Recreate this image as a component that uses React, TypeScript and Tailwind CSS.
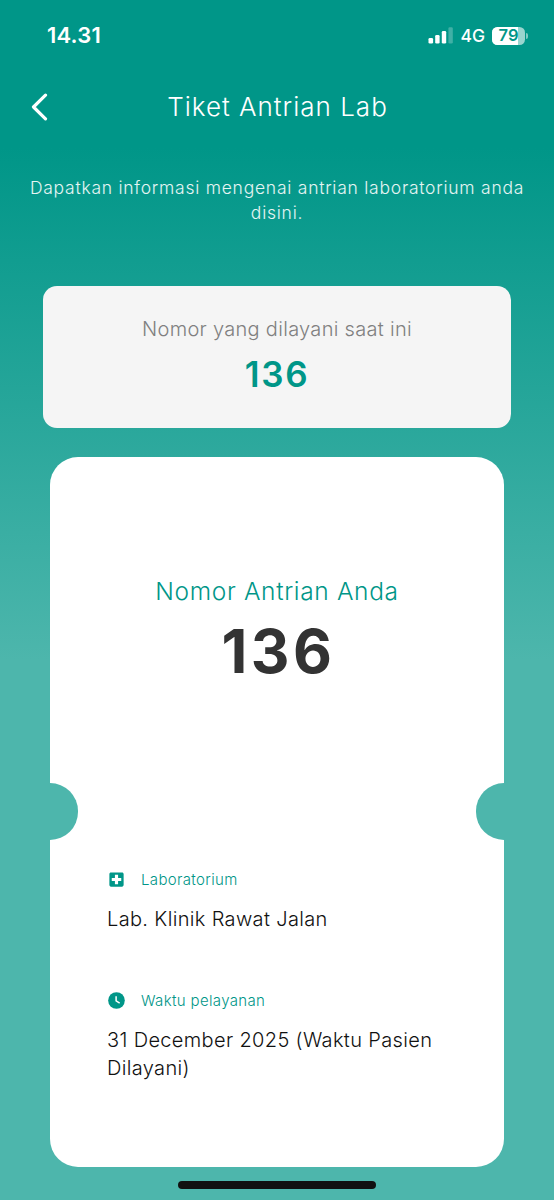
import type { ReactNode } from 'react';

const SignalIcon = () => (
  <svg width="25" height="17" viewBox="0 0 25 17" fill="white">
    <rect x="0.5" y="11" width="4.6" height="5.5" rx="1.3" />
    <rect x="7.2" y="8" width="4.4" height="8.5" rx="1.3" />
    <rect x="13.8" y="4" width="4.4" height="12.5" rx="1.3" />
    <rect x="20.4" y="0.3" width="4.4" height="16.2" rx="1.3" opacity="0.25" />
  </svg>
);

const BatteryIcon = ({ level }: { level: number }) => (
  <div className="flex items-center gap-px">
    <div className="relative flex h-[18px] w-[33px] items-center justify-center overflow-hidden rounded-[5.5px] bg-white/60">
      <div className="absolute inset-y-0 left-0 bg-white" style={{ width: `${level}%` }} />
      <span className="relative text-[16.5px] leading-none font-semibold text-[#009688]">{level}</span>
    </div>
    <div className="h-[6px] w-[2px] rounded-r-full bg-white/50" />
  </div>
);

const HospitalIcon = () => (
  <svg width="19" height="19" viewBox="0 0 24 24" fill="#009688">
    <path d="M19 3H5c-1.1 0-1.99.9-1.99 2L3 19c0 1.1.9 2 2 2h14c1.1 0 2-.9 2-2V5c0-1.1-.9-2-2-2zm-1 11h-4v4h-4v-4H6v-4h4V6h4v4h4v4z" />
  </svg>
);

const ClockIcon = () => (
  <svg width="19" height="19" viewBox="0 0 24 24">
    <circle cx="12" cy="12" r="10.5" fill="#009688" />
    <path d="M11.5 6.7v5.8l4.5 2.7" fill="none" stroke="white" strokeWidth="1.9" />
  </svg>
);

const InfoItem = ({ icon, label, value }: { icon: ReactNode; label: string; value: string }) => (
  <div>
    <div className="flex h-6 items-center gap-[15px]">
      {icon}
      <span className="text-[15px] leading-[22px] font-light tracking-[0.35px] text-[#009688]">{label}</span>
    </div>
    <p className="mt-[13px] w-[350px] text-[20px] leading-[28px] font-light tracking-[0.35px] text-[#111111]">
      {value}
    </p>
  </div>
);

const App = () => (
  <div className="flex h-[1200px] w-[554px] flex-col overflow-hidden bg-linear-to-b/srgb from-[#009688] from-[148px] to-[#4db6ac] to-[660px] font-['Inter',sans-serif]">
    <div className="flex h-[71px] shrink-0 items-center justify-between pr-[26px] pl-[47px] text-white">
      <span className="text-[22px] font-semibold tracking-[0.2px]">14.31</span>
      <div className="flex items-center gap-[7px]">
        <SignalIcon />
        <span className="pt-px text-[17.5px] font-medium">4G</span>
        <BatteryIcon level={79} />
      </div>
    </div>

    <header className="grid h-[70px] shrink-0 grid-cols-[80px_1fr_80px] items-center text-white">
      <button aria-label="Kembali" className="pt-px pl-[31px]">
        <svg width="18" height="28" viewBox="0 0 18 28" fill="none" stroke="white" strokeWidth="3.2" strokeLinecap="round" strokeLinejoin="round">
          <path d="M14.5 2.2 2.5 14l12 11.8" />
        </svg>
      </button>
      <h1 className="pl-px text-center text-[26px] font-light tracking-[1px] whitespace-nowrap">Tiket Antrian Lab</h1>
    </header>

    <p className="mx-auto mt-[34px] w-[510px] shrink-0 text-center text-[17.5px] leading-[25px] font-light tracking-[0.75px] text-white/90">
      Dapatkan informasi mengenai antrian laboratorium anda disini.
    </p>

    <section className="mx-auto mt-[61px] flex h-[142px] w-[468px] shrink-0 flex-col items-center rounded-[14px] bg-[#f5f5f5] pt-[29px]">
      <p className="text-[20px] leading-[28px] font-light tracking-[0.3px] text-[#808080]">Nomor yang dilayani saat ini</p>
      <p className="mt-[9px] text-[35px] leading-[44px] font-semibold tracking-[1.6px] text-[#009688]">136</p>
    </section>

    <section className="relative mx-auto mt-[28.5px] h-[710.5px] w-[454px] shrink-0 rounded-[28px] bg-white">
      <div className="absolute top-[326.5px] left-0 h-[57px] w-[28px] rounded-r-full bg-[#4db6ac]" />
      <div className="absolute top-[326.5px] right-0 h-[57px] w-[28px] rounded-l-full bg-[#4db6ac]" />

      <div className="flex h-[355px] flex-col items-center pt-[116px]">
        <p className="text-[24.5px] leading-[36px] font-light tracking-[0.65px] text-[#009688]">Nomor Antrian Anda</p>
        <p className="mt-[6px] pl-[3px] text-[60px] leading-[72px] font-bold tracking-[3.5px] text-[#333333]">136</p>
      </div>

      <div className="flex flex-col gap-[56px] pt-[56px] pl-[57px]">
        <InfoItem icon={<HospitalIcon />} label="Laboratorium" value="Lab. Klinik Rawat Jalan" />
        <InfoItem icon={<ClockIcon />} label="Waktu pelayanan" value="31 December 2025 (Waktu Pasien Dilayani)" />
      </div>
    </section>

    <div className="mx-auto mt-[14px] h-[8px] w-[198px] shrink-0 rounded-full bg-[#111111]" />
  </div>
);

export default App;
